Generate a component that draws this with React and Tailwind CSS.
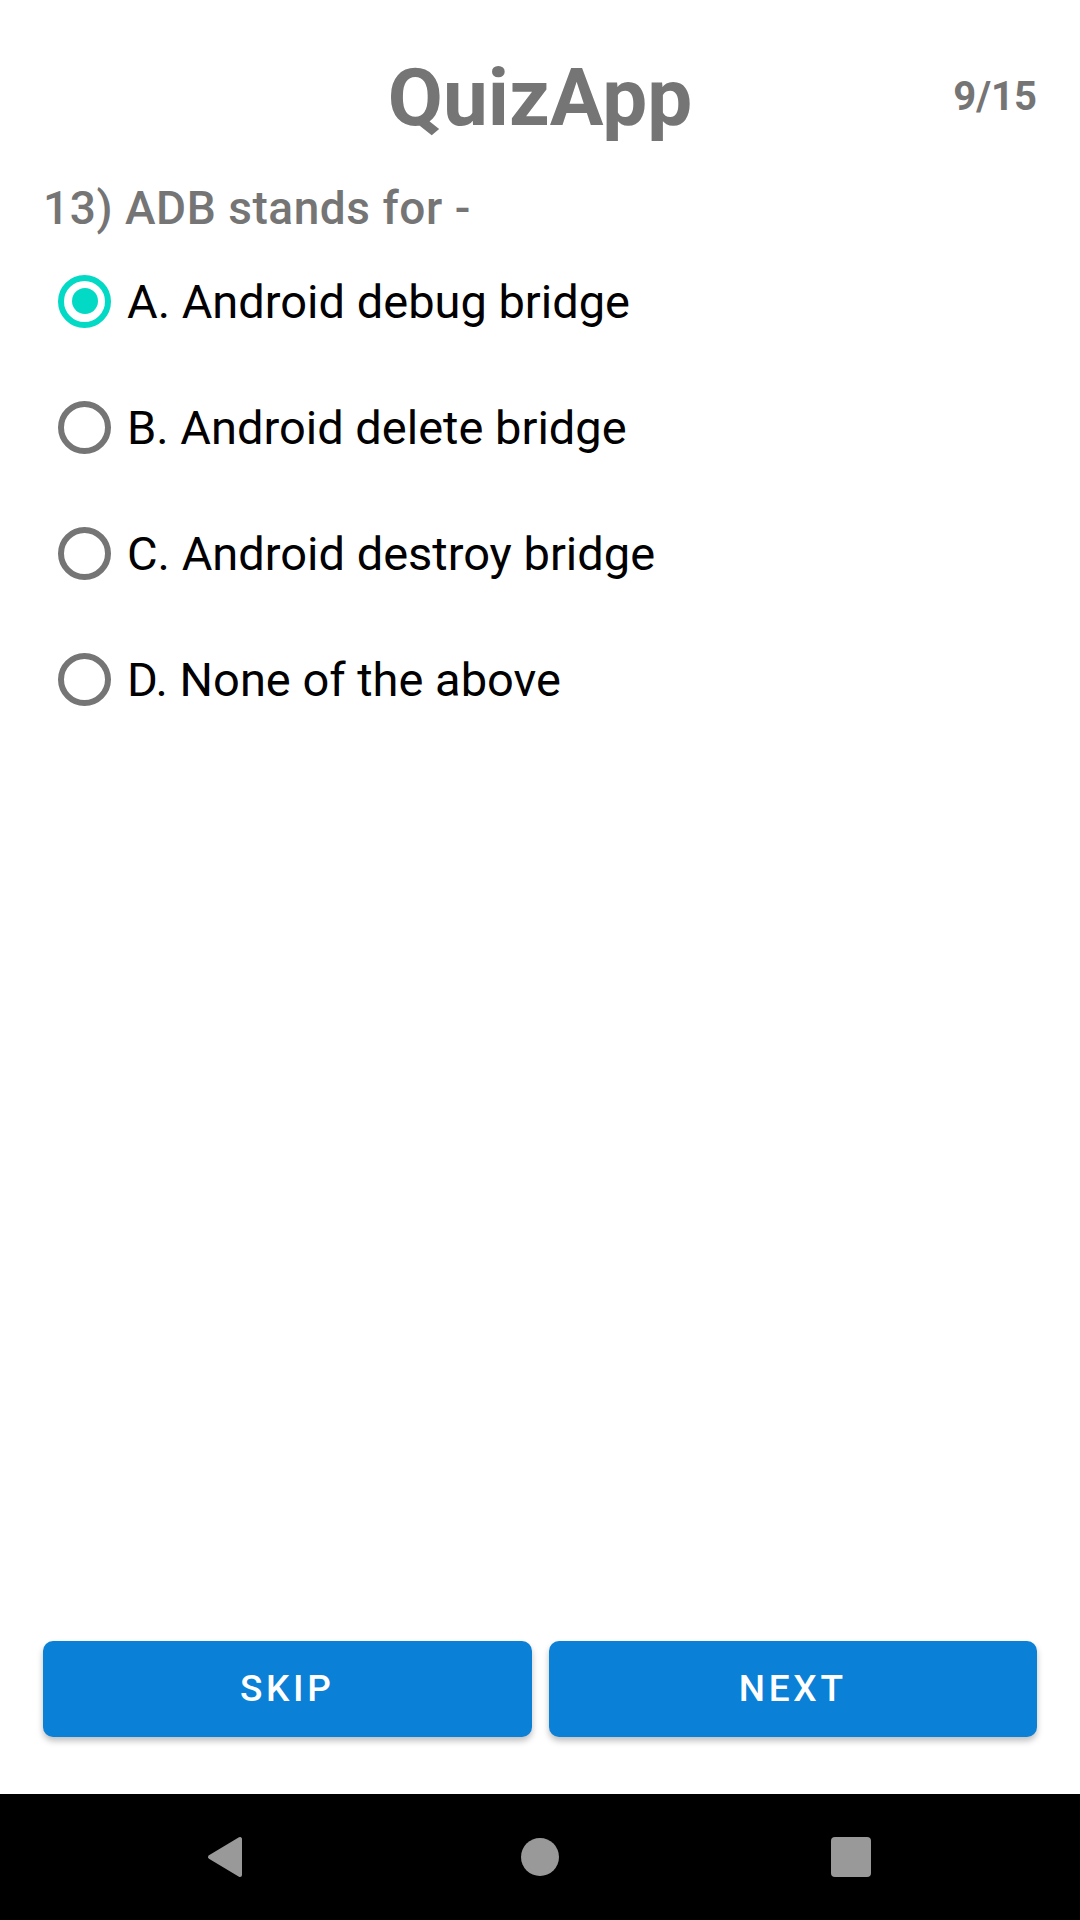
const options = [
  { label: 'A. Android debug bridge', selected: true },
  { label: 'B. Android delete bridge', selected: false },
  { label: 'C. Android destroy bridge', selected: false },
  { label: 'D. None of the above', selected: false },
];

function Radio({ selected }) {
  if (selected) {
    return (
      <div className="w-[53px] h-[53px] rounded-full border-[6px] border-[#03dac5] flex items-center justify-center shrink-0">
        <div className="w-[26px] h-[26px] rounded-full bg-[#03dac5]" />
      </div>
    );
  }
  return <div className="w-[53px] h-[53px] rounded-full border-[6px] border-[#757575] shrink-0" />;
}

export default function App() {
  return (
    <div className="w-[1080px] h-[1920px] flex flex-col bg-white font-['Roboto',sans-serif]">
      <div className="flex-1 flex flex-col">
        {/* Header */}
        <div className="grid grid-cols-[1fr_auto_1fr] items-start pt-[58px]">
          <div />
          <h1 className="text-[80px] leading-none font-bold text-[#757575]">QuizApp</h1>
          <div className="flex justify-end pr-[43px] mt-[19px]">
            <span className="text-[40px] leading-none font-bold text-[#757575]">9/15</span>
          </div>
        </div>

        {/* Question */}
        <p className="mt-[47px] pl-[43px] text-[46px] leading-none font-medium tracking-[0.012em] text-[#757575]">13) ADB stands for -</p>

        {/* Options */}
        <div className="mt-[7px] flex flex-col pl-[58px]">
          {options.map((o) => (
            <div key={o.label} className="h-[126px] flex items-center gap-[16px]">
              <Radio selected={o.selected} />
              <span className="text-[47px] leading-none text-black">{o.label}</span>
            </div>
          ))}
        </div>

        <div className="flex-1" />

        {/* Buttons */}
        <div className="flex gap-[17px] px-[43px] mb-[57px]">
          <button className="flex-1 h-[96px] rounded-[10px] bg-[#0b80d7] text-white text-[37px] font-medium tracking-[0.1em] shadow-[0_4px_6px_rgba(0,0,0,0.25)]">
            SKIP
          </button>
          <button className="flex-1 h-[96px] rounded-[10px] bg-[#0b80d7] text-white text-[37px] font-medium tracking-[0.1em] shadow-[0_4px_6px_rgba(0,0,0,0.25)]">
            NEXT
          </button>
        </div>
      </div>

      {/* Android nav bar */}
      <div className="h-[126px] bg-black flex items-center pl-[207px]">
        <svg width="36" height="42" viewBox="0 0 36 42">
          <path d="M33 3 L33 39 L3 21 Z" fill="#999999" stroke="#999999" strokeWidth="4" strokeLinejoin="round" />
        </svg>
        <div className="ml-[278px] w-[38px] h-[38px] rounded-full bg-[#999999]" />
        <div className="ml-[272px] w-[40px] h-[40px] rounded-[4px] bg-[#999999]" />
      </div>
    </div>
  );
}
